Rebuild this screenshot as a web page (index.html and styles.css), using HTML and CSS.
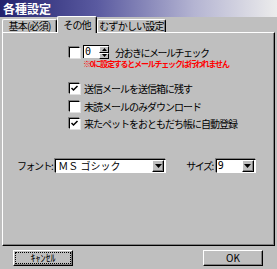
FILE: index.html
```html
<!DOCTYPE html>
<html lang="ja">
<head>
  <meta charset="UTF-8" />
  <title>各種設定</title>
  <link rel="stylesheet" href="styles.css">
</head>
<body>

  <div class="window">
    <!-- Title bar -->
    <div class="titlebar">各種設定</div>

    <!-- Tabs -->
    <div class="tabs">
      <div class="tab">基本(必須)</div>
      <div class="tab active">その他</div>
      <div class="tab">むずかしい設定</div>
    </div>

    <div class="panel">
      <div class="interval">
        <span class="check"></span>
        <span class="spin">
          <span class="spin-field">0</span>
          <span class="spin-btns">
            <span class="spin-btn"><svg width="5" height="3" viewBox="0 0 5 3"><path d="M2.5 0 L5 3 L0 3 Z" fill="#000"/></svg></span>
            <span class="spin-btn"><svg width="5" height="3" viewBox="0 0 5 3"><path d="M0 0 L5 0 L2.5 3 Z" fill="#000"/></svg></span>
          </span>
        </span>
        <span class="interval-label">分おきにメールチェック</span>
      </div>
      <div class="note">※0に設定するとメールチェックは行われません</div>

      <div class="options">
        <div class="option">
          <span class="check"><svg width="9" height="9" viewBox="0 0 9 9"><path d="M1.5 4 L3.5 6 L7.5 2" stroke="#000" stroke-width="1.5" fill="none"/></svg></span>
          送信メールを送信箱に残す
        </div>
        <div class="option">
          <span class="check"></span>
          未読メールのみダウンロード
        </div>
        <div class="option">
          <span class="check"><svg width="9" height="9" viewBox="0 0 9 9"><path d="M1.5 4 L3.5 6 L7.5 2" stroke="#000" stroke-width="1.5" fill="none"/></svg></span>
          来たペットをおともだち帳に自動登録
        </div>
      </div>

      <div class="font-row">
        <span class="font-label">フォント:</span>
        <span class="select font-select">
          <span class="select-value">ＭＳ ゴシック</span>
          <span class="drop"><svg width="7" height="4" viewBox="0 0 7 4"><path d="M0 0 L7 0 L3.5 4 Z" fill="#000"/></svg></span>
        </span>
        <span class="size-label">サイズ:</span>
        <span class="select size-select">
          <span class="select-value">9</span>
          <span class="drop"><svg width="7" height="4" viewBox="0 0 7 4"><path d="M0 0 L7 0 L3.5 4 Z" fill="#000"/></svg></span>
        </span>
      </div>
    </div>

    <div class="buttons">
      <button class="btn focus"><span>ｷｬﾝｾﾙ</span></button>
      <button class="btn"><span>OK</span></button>
    </div>
  </div>

</body>
</html>
```

FILE: styles.css
```css
body {
  margin: 0;
  background-color: #bfbfbf;
  font-family: "Noto Sans CJK JP", "DejaVu Sans", sans-serif;
  color: #000;
}

.window {
  width: 277px;
  height: 269px;
  display: flex;
  flex-direction: column;
  background-color: #bfbfbf;
}

.titlebar {
  height: 17px;
  line-height: 17px;
  padding-left: 3px;
  font-size: 12px;
  font-weight: bold;
  color: white;
  background: linear-gradient(90deg, #22226e 0%, #5a5aa0 35%, #b4b4d2 70%, #ececec 100%);
}

.tabs {
  display: flex;
  align-items: flex-end;
  height: 15px;
  padding-left: 2px;
  position: relative;
  z-index: 1;
}

.tab {
  box-sizing: border-box;
  height: 13px;
  line-height: 12px;
  text-align: center;
  white-space: nowrap;
  font-size: 10px;
  letter-spacing: -0.8px;
  border-top: 1px solid #fff;
  border-left: 1px solid #fff;
  border-right: 1px solid #000;
  box-shadow: inset -1px 0 0 #808080;
  border-radius: 2px 2px 0 0;
}

.tab:first-child {
  width: 55px;
}

.tab.active {
  width: 40px;
  height: 17px;
  line-height: 15px;
  margin-bottom: -1px;
  background-color: #bfbfbf;
}

.tab:last-child {
  width: 69px;
}

.panel {
  height: 212px;
  margin: 0 2px;
  border-top: 1px solid #fff;
  border-left: 1px solid #fff;
  border-right: 1px solid #000;
  border-bottom: 1px solid #000;
  box-shadow: inset -1px -1px 0 #808080;
  display: flex;
  flex-direction: column;
}

.check {
  width: 9px;
  height: 9px;
  background: #fff;
  border-top: 1px solid #000;
  border-left: 1px solid #000;
  border-right: 1px solid #fff;
  border-bottom: 1px solid #fff;
  box-shadow: -1px -1px 0 #808080, 1px 1px 0 #dfdfdf;
  display: inline-flex;
  flex-shrink: 0;
}

.interval {
  display: flex;
  align-items: center;
  height: 14px;
  margin-top: 12px;
  margin-left: 66px;
}

.spin {
  display: flex;
  height: 14px;
  margin-left: 3px;
}

.spin-field {
  width: 14px;
  height: 12px;
  line-height: 12px;
  padding-left: 1px;
  font-size: 10px;
  font-family: "DejaVu Sans Mono", monospace;
  background: #fff;
  border-top: 1px solid #000;
  border-left: 1px solid #000;
}

.spin-btns {
  display: flex;
  flex-direction: column;
  width: 10px;
  border-top: 1px solid #000;
}

.spin-btn {
  flex: 1;
  display: flex;
  align-items: center;
  justify-content: center;
  background: #bfbfbf;
  border-top: 1px solid #fff;
  border-left: 1px solid #fff;
  border-right: 1px solid #000;
  border-bottom: 1px solid #000;
}

.interval-label {
  margin-left: 6px;
  font-size: 10px;
  letter-spacing: -1.5px;
}

.note {
  margin-left: 80px;
  height: 10px;
  line-height: 10px;
  font-size: 8px;
  font-weight: bold;
  color: #f00;
  letter-spacing: -1.2px;
}

.options {
  margin-top: 11px;
  margin-left: 66px;
  display: flex;
  flex-direction: column;
}

.option {
  display: flex;
  align-items: center;
  gap: 4px;
  height: 17.5px;
  font-size: 10px;
  letter-spacing: -1px;
}

.font-row {
  display: flex;
  align-items: center;
  height: 14px;
  margin-top: 26px;
  margin-left: 14px;
  font-size: 10px;
}

.font-label,
.size-label {
  letter-spacing: -1.5px;
}

.select {
  display: flex;
  align-items: center;
  height: 12px;
  background: #fff;
  border-top: 1px solid #000;
  border-left: 1px solid #000;
  border-right: 1px solid #fff;
  border-bottom: 1px solid #fff;
  box-shadow: -1px -1px 0 #808080;
  margin-left: 3px;
}

.font-select {
  width: 109px;
}

.size-select {
  width: 38px;
}

.select-value {
  flex: 1;
  padding-left: 2px;
  line-height: 12px;
  font-size: 10px;
}

.size-select .select-value {
  font-family: "DejaVu Sans Mono", monospace;
  padding-left: 1px;
}

.drop {
  width: 10px;
  height: 10px;
  margin-right: 1px;
  display: flex;
  align-items: center;
  justify-content: center;
  background: #bfbfbf;
  border-top: 1px solid #fff;
  border-left: 1px solid #fff;
  border-right: 1px solid #000;
  border-bottom: 1px solid #000;
  box-shadow: inset -1px -1px 0 #808080;
}

.size-label {
  margin-left: 20px;
}

.buttons {
  display: flex;
  justify-content: space-between;
  padding: 4px 13px 0 13px;
}

.btn {
  width: 60px;
  height: 16px;
  padding: 2px;
  background: #bfbfbf;
  border-top: 1px solid #fff;
  border-left: 1px solid #fff;
  border-right: 1px solid #000;
  border-bottom: 1px solid #000;
  box-shadow: inset -1px -1px 0 #808080;
  font-family: "Noto Sans CJK JP", sans-serif;
  font-size: 10px;
  line-height: 10px;
  display: flex;
}

.btn span {
  flex: 1;
  text-align: center;
}

.btn.focus span {
  outline: 1px dotted #000;
}

.btn:last-child {
  margin-right: 1px;
}
```
